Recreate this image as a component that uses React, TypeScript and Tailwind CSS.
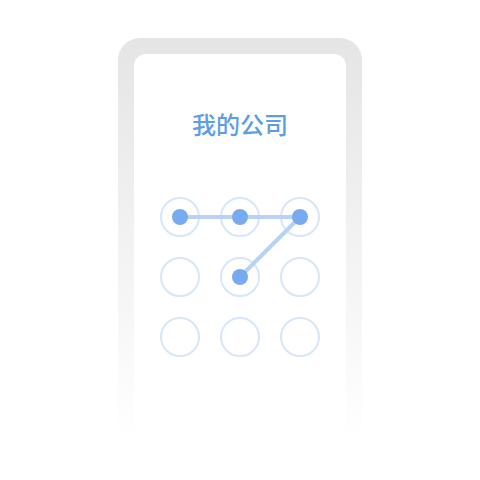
import React from "react";

const ACTIVE = [0, 1, 2, 4];

export default function App() {
  const cells = Array.from({ length: 9 }, (_, i) => i);
  const pos = (i: number) => ({ x: 20 + (i % 3) * 60, y: 20 + Math.floor(i / 3) * 60 });
  const path = ACTIVE.map((i) => `${pos(i).x},${pos(i).y}`).join(" ");

  return (
    <main className="w-[480px] h-[480px] bg-white flex justify-center">
      <div className="mt-[38px] w-[244px] h-[404px] rounded-[22px] bg-gradient-to-b from-[#e5e5e5] to-white px-4 pt-4">
        <div className="h-full rounded-[12px] bg-white flex flex-col items-center">
          <h1 className="mt-[54px] text-[24px] leading-[32px] font-medium text-[#5d9de6] font-['Noto_Sans_CJK_SC',sans-serif]">
            我的公司
          </h1>
          <div className="relative mt-[57px] w-[160px] h-[160px] grid grid-cols-3 gap-5">
            {cells.map((i) => (
              <div key={i} className="w-10 h-10 rounded-full border-2 border-[#d7e6f9]" />
            ))}
            <svg className="absolute inset-0" width="160" height="160" viewBox="0 0 160 160">
              <polyline points={path} fill="none" stroke="#b8d2f6" strokeWidth="4" strokeLinejoin="round" />
              {ACTIVE.map((i) => (
                <circle key={i} cx={pos(i).x} cy={pos(i).y} r="8" fill="#78aaf0" />
              ))}
            </svg>
          </div>
        </div>
      </div>
    </main>
  );
}
